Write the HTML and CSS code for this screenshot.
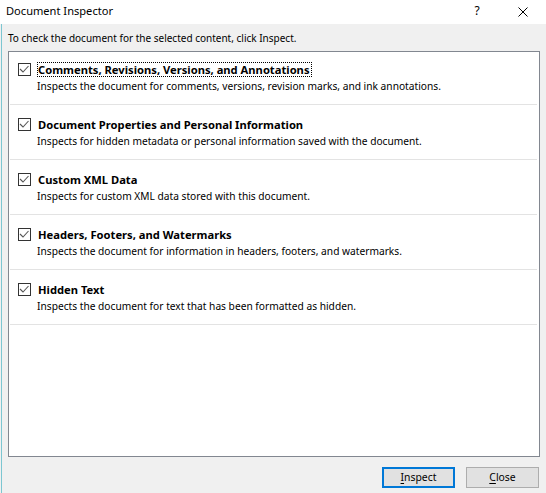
FILE: index.html
```html
<!DOCTYPE html>
<html lang="en">
<head>
<meta charset="utf-8">
<title>Document Inspector</title>
<link rel="stylesheet" href="styles.css">
</head>
<body>
<div class="window">
  <div class="titlebar">
    <div class="title">Document Inspector</div>
    <div class="tb-btn help">?</div>
    <div class="tb-btn close">
      <svg width="10" height="10" viewBox="0 0 10 10"><path d="M0.5 0.5 L9.5 9.5 M9.5 0.5 L0.5 9.5" stroke="#000" stroke-width="1" fill="none"/></svg>
    </div>
  </div>
  <div class="content">
    <div class="intro">To check the document for the selected content, click Inspect.</div>
    <div class="list">
      <div class="item">
        <svg class="check" width="13" height="13" viewBox="0 0 13 13"><rect x="0.5" y="0.5" width="12" height="12" fill="#fff" stroke="#333"/><polyline points="2,6 5,9 10.5,3" fill="none" stroke="#555" stroke-width="1.1"/></svg>
        <div class="text">
          <div class="head focus">Comments, Revisions, Versions, and Annotations</div>
          <div class="desc">Inspects the document for comments, versions, revision marks, and ink annotations.</div>
        </div>
      </div>
      <div class="item">
        <svg class="check" width="13" height="13" viewBox="0 0 13 13"><rect x="0.5" y="0.5" width="12" height="12" fill="#fff" stroke="#333"/><polyline points="2,6 5,9 10.5,3" fill="none" stroke="#555" stroke-width="1.1"/></svg>
        <div class="text">
          <div class="head">Document Properties and Personal Information</div>
          <div class="desc">Inspects for hidden metadata or personal information saved with the document.</div>
        </div>
      </div>
      <div class="item">
        <svg class="check" width="13" height="13" viewBox="0 0 13 13"><rect x="0.5" y="0.5" width="12" height="12" fill="#fff" stroke="#333"/><polyline points="2,6 5,9 10.5,3" fill="none" stroke="#555" stroke-width="1.1"/></svg>
        <div class="text">
          <div class="head">Custom XML Data</div>
          <div class="desc">Inspects for custom XML data stored with this document.</div>
        </div>
      </div>
      <div class="item">
        <svg class="check" width="13" height="13" viewBox="0 0 13 13"><rect x="0.5" y="0.5" width="12" height="12" fill="#fff" stroke="#333"/><polyline points="2,6 5,9 10.5,3" fill="none" stroke="#555" stroke-width="1.1"/></svg>
        <div class="text">
          <div class="head">Headers, Footers, and Watermarks</div>
          <div class="desc">Inspects the document for information in headers, footers, and watermarks.</div>
        </div>
      </div>
      <div class="item">
        <svg class="check" width="13" height="13" viewBox="0 0 13 13"><rect x="0.5" y="0.5" width="12" height="12" fill="#fff" stroke="#333"/><polyline points="2,6 5,9 10.5,3" fill="none" stroke="#555" stroke-width="1.1"/></svg>
        <div class="text">
          <div class="head">Hidden Text</div>
          <div class="desc">Inspects the document for text that has been formatted as hidden.</div>
        </div>
      </div>
    </div>
    <div class="buttons">
      <div class="btn default"><span class="ul">I</span>nspect</div>
      <div class="btn"><span class="ul">C</span>lose</div>
    </div>
  </div>
</div>
</body>
</html>
```
FILE: styles.css
```css
* { box-sizing: border-box; }
html, body {
  margin: 0;
  padding: 0;
  background: #f0f0f0;
}
body {
  width: 546px;
  height: 493px;
  overflow: hidden;
  font-family: "Noto Sans", "Open Sans", sans-serif;
  font-size: 10px;
  color: #000;
}
.window {
  height: 493px;
  display: flex;
  flex-direction: column;
}
.titlebar {
  height: 24px;
  background: #fff;
  display: flex;
  align-items: flex-start;
}
.title {
  flex: 1;
  padding-left: 6px;
  font-size: 11.1px;
  line-height: 22px;
}
.tb-btn {
  width: 46px;
  height: 24px;
  display: flex;
  align-items: center;
  justify-content: center;
}
.help {
  font-size: 12px;
  line-height: 22px;
  align-items: flex-start;
}
.close svg { display: block; margin-top: -1px; }
.content {
  flex: 1;
  margin-left: 1px;
  border-left: 1px solid #7cc6d1;
  padding: 6px 6px 5px 6px;
  display: flex;
  flex-direction: column;
}
.intro {
  line-height: 16px;
  height: 16px;
}
.list {
  flex: 1;
  margin-top: 5px;
  background: #fff;
  border: 1px solid #828790;
}
.item {
  height: 55px;
  margin: 0 2px 0 1px;
  padding: 13px 0 0 8px;
  border-bottom: 1px solid #e3e3e3;
  display: flex;
  align-items: flex-start;
}
.item:first-child {
  height: 53px;
  padding-top: 11px;
}
.check {
  display: block;
  flex: none;
}
.text {
  margin-left: 6px;
  margin-top: -1px;
}
.head {
  font-size: 11.2px;
  font-weight: 700;
  line-height: 13px;
  padding: 0 1px 0 0;
  border: 1px solid transparent;
  display: inline-block;
}
.head.focus {
  border: 1px dotted #000;
}
.desc {
  font-size: 10.2px;
  line-height: 18px;
}
.buttons {
  margin-top: 10px;
  display: flex;
  justify-content: flex-end;
  gap: 11px;
  padding-right: 1px;
}
.btn {
  width: 73px;
  height: 21px;
  background: #e1e1e1;
  border: 1px solid #adadad;
  display: flex;
  align-items: center;
  justify-content: center;
  line-height: 17px;
  font-size: 10.4px;
}
.btn.default {
  border: 2px solid #0078d7;
}
.ul { text-decoration: underline; text-underline-offset: 2px; }
```
